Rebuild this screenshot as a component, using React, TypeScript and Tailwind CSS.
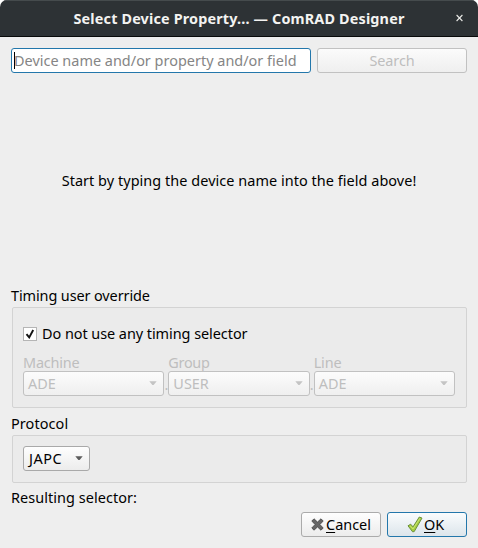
import type { ReactNode } from "react";

function Arrow({ className }: { className: string }) {
  return (
    <svg width="8" height="5" viewBox="0 0 8 5" className={className} shapeRendering="geometricPrecision">
      <path d="M0.3 0.3H7.7L4.6 4H3.4Z" fill="currentColor" />
    </svg>
  );
}

function DisabledCombo({ label, value, tracking }: { label: string; value: string; tracking: string }) {
  return (
    <div className="flex min-w-0 flex-1 flex-col text-[#bebebe]">
      <div className={"h-[17px] whitespace-nowrap leading-[17px] " + tracking}>{label}</div>
      <div className="flex h-[25px] items-center justify-between rounded-[3px] border border-[#c1c1c1] bg-linear-to-b from-[#fcfcfc] to-[#efefef] pr-[6px] pl-[4px]">
        <span className="tracking-[0px]">{value}</span>
        <Arrow className="text-[#c4c4c4]" />
      </div>
    </div>
  );
}

function Dot() {
  return <div className="flex w-[4px] shrink-0 items-end justify-center pb-[1px] text-[#bebebe]">.</div>;
}

function Panel({ className, children }: { className: string; children: ReactNode }) {
  return <div className={"ml-px rounded-[2px] border border-[#d3d3d3] bg-[#ebebeb] px-[10px] " + className}>{children}</div>;
}

export default function App() {
  return (
    <div className="h-[548px] w-[478px] bg-white font-['Noto_Sans',sans-serif] text-[14.45px] leading-[20px] text-black">
      <div className="flex h-full flex-col overflow-hidden rounded-t-[7px] bg-[#eeeeee]">
        <header className="relative flex h-[37px] shrink-0 items-center justify-center border-t border-b border-t-[#454b4d] border-b-[#080a0a] bg-[#2d3235] text-[#f3f3f1]">
          <h1 className="whitespace-nowrap text-[14.4px] font-bold tracking-[0.16px]">Select Device Property... — ComRAD Designer</h1>
          <svg className="absolute top-[13px] right-[15px]" width="7" height="8" viewBox="0 0 7 8" stroke="#e8e8e6" strokeWidth="1.1">
            <path d="M0.6 1L6.4 7M6.4 1L0.6 7" />
          </svg>
        </header>
        <main className="flex flex-1 flex-col px-[11px] pt-[11px] pb-[11px]">
          <div className="flex h-[25px] gap-[6px]">
            <div className="flex w-[300px] items-center rounded-[3px] border border-[#2377ab] bg-white pl-[2px]">
              <span className="h-[17px] w-px shrink-0 bg-black" />
              <span className="-ml-px whitespace-nowrap tracking-[0.01px] text-[#858585]">Device name and/or property and/or field</span>
            </div>
            <div className="flex w-[150px] items-center justify-center rounded-[3px] border border-[#c1c1c1] bg-linear-to-b from-[#fbfbfb] to-[#efefef] text-[#bebebe]">
              <span className="tracking-[-0.1px]">Search</span>
            </div>
          </div>
          <div className="flex h-[213px] items-center justify-center whitespace-nowrap pt-[3px]">
            <span className="tracking-[0.05px]">Start by typing the device name into the field above!</span>
          </div>
          <div className="h-[21px] leading-[20px] tracking-[-0.1px]">Timing user override</div>
          <Panel className="h-[101px] pt-[16px]">
            <div className="flex h-[20px] items-center gap-[5px]">
              <span className="flex size-[14px] items-center justify-center border border-[#b5b5b5] bg-white">
                <svg width="10" height="10" viewBox="0 0 10 10" fill="none" stroke="#111" strokeWidth="1.9">
                  <path d="M1.5 5.2L4.2 8.4L8.2 1" />
                </svg>
              </span>
              <span className="tracking-[-0.05px]">Do not use any timing selector</span>
            </div>
            <div className="mt-[10px] mr-px flex">
              <DisabledCombo label="Machine" value="ADE" tracking="tracking-[-0.2px]" />
              <Dot />
              <DisabledCombo label="Group" value="USER" tracking="tracking-[-0.3px]" />
              <Dot />
              <DisabledCombo label="Line" value="ADE" tracking="tracking-[-0.1px]" />
            </div>
          </Panel>
          <div className="h-[27px] pt-[6px] leading-[20px] tracking-[0.1px]">Protocol</div>
          <Panel className="h-[48px] pt-[10px]">
            <div className="flex h-[25px] w-[67px] items-center justify-between rounded-[3px] border border-[#a9a9a9] bg-linear-to-b from-[#fefefe] to-[#ececec] pr-[6px] pl-[5px]">
              <span className="tracking-[0.5px]">JAPC</span>
              <Arrow className="text-[#5c5c5c]" />
            </div>
          </Panel>
          <div className="h-[29px] pt-[5px] leading-[20px] tracking-[0.06px]">Resulting selector:</div>
          <div className="flex h-[25px] justify-end gap-[6px]">
            <div className="flex w-[80px] items-center rounded-[3px] border border-[#ababab] bg-linear-to-b from-[#fefefe] to-[#ececec] pl-[9px]">
              <svg width="13" height="13" viewBox="0 0 13 13">
                <path d="M3 0.8L6.5 4.1L10 0.8L12.2 3L8.9 6.5L12.2 10L10 12.2L6.5 8.9L3 12.2L0.8 10L4.1 6.5L0.8 3Z" fill="#666" stroke="#4d4d4d" strokeWidth="0.9" strokeLinejoin="round" />
              </svg>
              <span className="ml-[2px]"><span className="underline decoration-1 underline-offset-[2px]">C</span>ancel</span>
            </div>
            <div className="flex w-[80px] items-center rounded-[3px] border border-[#2377ab] bg-linear-to-b from-[#fafcfd] to-[#dce5eb] pl-[19px]">
              <svg width="16" height="17" viewBox="0 0 16 17">
                <path d="M1 9.8L3.7 8.2L6 10.9L12.3 1L15 2.1L7.2 15.6L5.6 15.8Z" fill="#a8cf3e" stroke="#6a903c" strokeWidth="1" strokeLinejoin="round" />
                <path d="M3.2 9.9L6 13L12.9 2.3" fill="none" stroke="#c8e574" strokeWidth="1" />
              </svg>
              <span className="ml-px"><span className="underline decoration-1 underline-offset-[2px]">O</span>K</span>
            </div>
          </div>
        </main>
      </div>
    </div>
  );
}
